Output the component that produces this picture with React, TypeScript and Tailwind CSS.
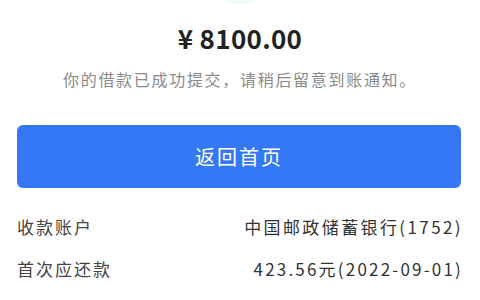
export default function App() {
  return (
    <div
      className="w-[480px] h-[300px] bg-white overflow-hidden relative"
      style={{ fontFamily: '"Noto Sans CJK SC", "Noto Sans", sans-serif' }}
    >
      <div className="absolute left-[222px] top-[-6px] w-[36px] h-[10px] rounded-b-full bg-[#f2fbf6]" />
      <div className="flex flex-col items-center pt-[21px]">
        <div className="text-[26px] leading-[34px] font-bold text-[#222] tracking-[0.3px]">¥ 8100.00</div>
        <p className="mt-[13px] text-[16px] leading-[22px] text-[#8a8a8a] tracking-[1.7px]">
          你的借款已成功提交，请稍后留意到账通知。
        </p>
      </div>
      <div className="pl-[17px] pr-[19px] mt-[35px]">
        <button className="w-full h-[63px] rounded-[6px] bg-[#3478f6] text-white text-[20px] tracking-[2px]">
          返回首页
        </button>
      </div>
      <div className="pl-[17px] pr-[19px] mt-[18px] text-[17px] text-[#333] tracking-[2px]">
        <div className="flex justify-between items-center h-[42px]">
          <span className="text-[#444]">收款账户</span>
          <span className="mr-[-2px] tracking-[2.4px]">中国邮政储蓄银行(1752)</span>
        </div>
        <div className="flex justify-between items-center h-[42px]">
          <span className="text-[#444]">首次应还款</span>
          <span className="mr-[-2px] tracking-[2.2px]">423.56元(2022-09-01)</span>
        </div>
      </div>
    </div>
  );
}
